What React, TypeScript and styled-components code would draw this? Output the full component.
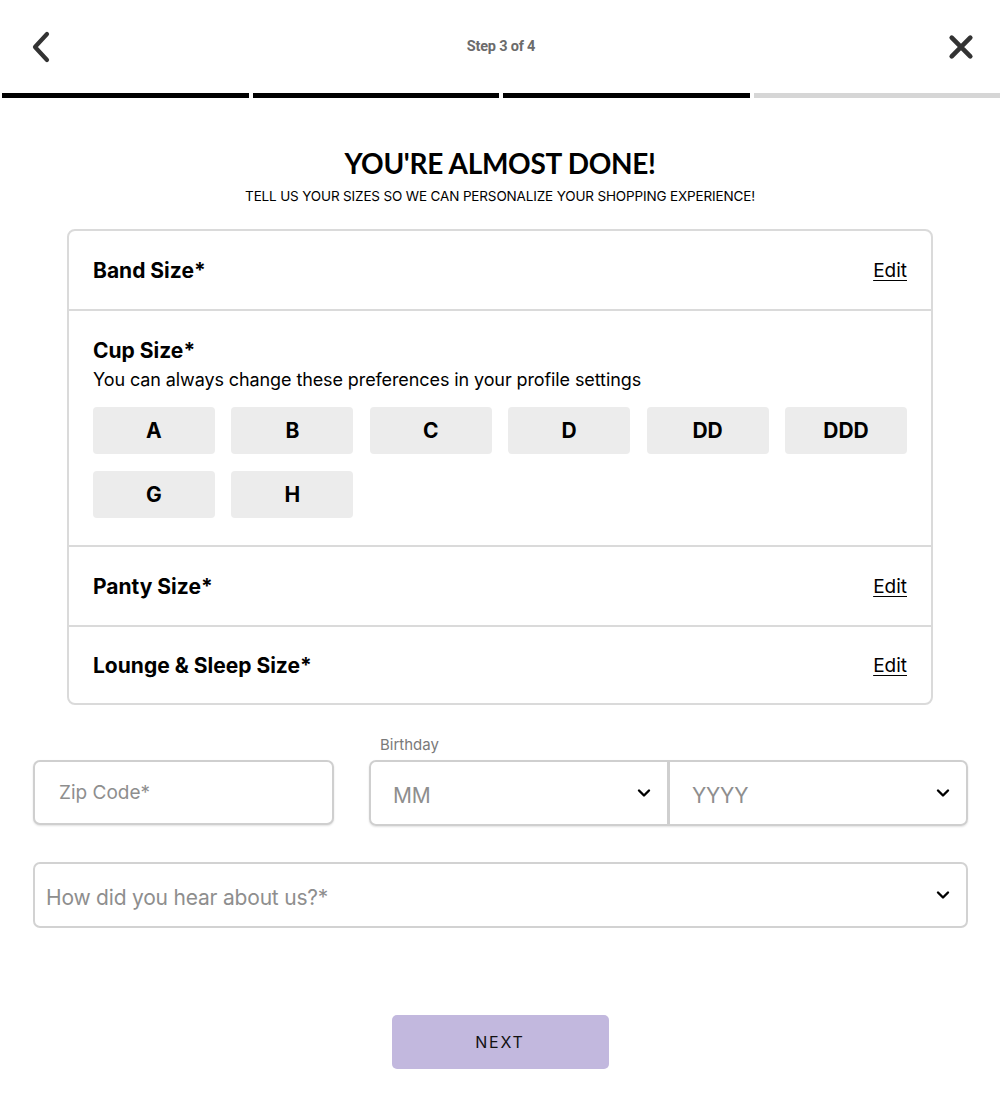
import React from "react";
import styled, { createGlobalStyle } from "styled-components";

const Global = createGlobalStyle`
  html, body { margin: 0; padding: 0; background: #fff; }
  body { font-family: Inter, "Noto Sans", sans-serif; color: #000; }
  * { box-sizing: border-box; }
`;

const Page = styled.div`
  width: 1000px;
  min-height: 1114px;
  background: #fff;
  display: flex;
  flex-direction: column;
`;

const Header = styled.header`
  height: 93px;
  display: flex;
  align-items: center;
  justify-content: space-between;
  padding: 0 26px 0 28px;
`;

const IconButton = styled.button`
  border: none;
  background: none;
  padding: 0;
  width: 26px;
  height: 32px;
  display: flex;
  align-items: center;
  justify-content: center;
  cursor: pointer;
`;

const StepText = styled.div`
  font-family: Roboto, "Liberation Sans", sans-serif;
  font-size: 14.5px;
  font-weight: 700;
  color: #6b6b6b;
  letter-spacing: -0.2px;
`;

const Progress = styled.div`
  display: flex;
  gap: 4px;
  padding-left: 2px;
`;

const Segment = styled.div<{ $done: boolean }>`
  flex: 1;
  height: 5px;
  background: ${(p) => (p.$done ? "#000" : "#d6d6d6")};
`;

const Title = styled.h1`
  margin: 48px 0 0;
  text-align: center;
  font-family: Lato, "Noto Sans", sans-serif;
  font-weight: 700;
  font-size: 28px;
  line-height: 34px;
  letter-spacing: -0.3px;
`;

const Subtitle = styled.p`
  margin: 8px 0 0;
  text-align: center;
  font-family: Inter, sans-serif;
  font-size: 13.5px;
  line-height: 17px;
  letter-spacing: -0.15px;
`;

const Card = styled.div`
  margin: 24px 67px 0;
  border: 2px solid #dadada;
  border-radius: 8px;
  display: flex;
  flex-direction: column;
`;

const Row = styled.div`
  height: 78px;
  display: flex;
  align-items: center;
  justify-content: space-between;
  padding: 0 24px;
  & + & { border-top: 2px solid #dadada; }
`;

const Divider = styled.div`
  height: 2px;
  background: #dadada;
`;

const Label = styled.div`
  font-size: 21px;
  font-weight: 700;
  letter-spacing: 0;
  line-height: 25px;
`;

const EditLink = styled.a`
  font-size: 19px;
  color: #000;
  text-decoration: underline;
  text-underline-offset: 3px;
  cursor: pointer;
`;

const CupSection = styled.div`
  padding: 27px 24px 27px;
  display: flex;
  flex-direction: column;
`;

const Hint = styled.div`
  margin-top: 6px;
  font-size: 18px;
  line-height: 22px;
  letter-spacing: -0.1px;
`;

const SizeGrid = styled.div`
  margin-top: 16px;
  display: grid;
  grid-template-columns: repeat(6, 1fr);
  column-gap: 16.5px;
  row-gap: 17px;
`;

const SizeButton = styled.button`
  height: 47px;
  border: none;
  border-radius: 4px;
  background: #ececec;
  font-family: Inter, sans-serif;
  font-size: 21px;
  font-weight: 700;
  color: #000;
  cursor: pointer;
`;

const Form = styled.div`
  margin-top: 31px;
  padding: 0 32px 0 33px;
  display: flex;
  flex-direction: column;
  gap: 36px;
`;

const FieldRow = styled.div`
  display: flex;
  align-items: flex-end;
  gap: 35px;
`;

const ZipInput = styled.input`
  width: 301px;
  height: 65px;
  border: 2px solid #cfcfcf;
  border-radius: 7px;
  box-shadow: 0 1px 2px rgba(0,0,0,0.12);
  padding: 0 24px;
  font-family: Inter, sans-serif;
  font-size: 19px;
  margin-bottom: 1px;
  &::placeholder { color: #8e8e8e; }
`;

const BirthdayCol = styled.div`
  flex: 1;
  display: flex;
  flex-direction: column;
`;

const SmallLabel = styled.div`
  font-size: 15px;
  color: #7a7a7a;
  padding-left: 11px;
  margin-bottom: 6px;
  line-height: 18px;
`;

const SelectGroup = styled.div`
  display: flex;
  height: 66px;
  border: 2px solid #cfcfcf;
  border-radius: 7px;
  box-shadow: 0 1px 2px rgba(0,0,0,0.12);
`;

const SelectPart = styled.div<{ $divider?: boolean }>`
  flex: 1;
  display: flex;
  align-items: center;
  justify-content: space-between;
  padding: 0 16px 0 22px;
  border-left: ${(p) => (p.$divider ? "3px solid #cfcfcf" : "none")};
`;

const Placeholder = styled.span<{ $size?: number }>`
  font-size: ${(p) => p.$size ?? 21}px;
  color: #8e8e8e;
  letter-spacing: -0.2px;
  padding-top: 4px;
`;

const HearSelect = styled.div`
  height: 66px;
  border: 2px solid #d2d2d2;
  border-radius: 7px;
  display: flex;
  align-items: center;
  justify-content: space-between;
  padding: 0 16px 0 11px;
`;

const Footer = styled.div`
  margin-top: 87px;
  display: flex;
  justify-content: center;
`;

const NextButton = styled.button`
  width: 217px;
  height: 54px;
  border: none;
  border-radius: 5px;
  background: #c2b8de;
  font-family: Inter, sans-serif;
  font-size: 16px;
  letter-spacing: 1.8px;
  color: #111;
  cursor: pointer;
`;

const Chevron = () => (
  <svg width="14" height="10" viewBox="0 0 14 10">
    <path d="M2 2.5 L7 7.5 L12 2.5" fill="none" stroke="#000" strokeWidth="2.4" strokeLinecap="round" strokeLinejoin="round" />
  </svg>
);

const sizes = ["A", "B", "C", "D", "DD", "DDD", "G", "H"];

export default function App() {
  return (
    <Page>
      <Global />
      <Header>
        <IconButton aria-label="Back">
          <svg width="22" height="34" viewBox="0 0 22 34">
            <path d="M17 4 L5 17 L17 30" fill="none" stroke="#333" strokeWidth="4.2" strokeLinecap="round" strokeLinejoin="round" />
          </svg>
        </IconButton>
        <StepText>Step 3 of 4</StepText>
        <IconButton aria-label="Close">
          <svg width="28" height="28" viewBox="0 0 28 28">
            <path d="M4 4 L24 24 M24 4 L4 24" fill="none" stroke="#333" strokeWidth="5" strokeLinecap="round" />
          </svg>
        </IconButton>
      </Header>
      <Progress>
        <Segment $done />
        <Segment $done />
        <Segment $done />
        <Segment $done={false} />
      </Progress>

      <Title>YOU'RE ALMOST DONE!</Title>
      <Subtitle>TELL US YOUR SIZES SO WE CAN PERSONALIZE YOUR SHOPPING EXPERIENCE!</Subtitle>

      <Card>
        <Row>
          <Label>Band Size*</Label>
          <EditLink>Edit</EditLink>
        </Row>
        <Divider />
        <CupSection>
          <Label>Cup Size*</Label>
          <Hint>You can always change these preferences in your profile settings</Hint>
          <SizeGrid>
            {sizes.map((s) => (
              <SizeButton key={s}>{s}</SizeButton>
            ))}
          </SizeGrid>
        </CupSection>
        <Divider />
        <Row>
          <Label>Panty Size*</Label>
          <EditLink>Edit</EditLink>
        </Row>
        <Row>
          <Label>Lounge &amp; Sleep Size*</Label>
          <EditLink>Edit</EditLink>
        </Row>
      </Card>

      <Form>
        <FieldRow>
          <ZipInput placeholder="Zip Code*" />
          <BirthdayCol>
            <SmallLabel>Birthday</SmallLabel>
            <SelectGroup>
              <SelectPart>
                <Placeholder>MM</Placeholder>
                <Chevron />
              </SelectPart>
              <SelectPart $divider>
                <Placeholder>YYYY</Placeholder>
                <Chevron />
              </SelectPart>
            </SelectGroup>
          </BirthdayCol>
        </FieldRow>
        <HearSelect>
          <Placeholder $size={21}>How did you hear about us?*</Placeholder>
          <Chevron />
        </HearSelect>
      </Form>

      <Footer>
        <NextButton>NEXT</NextButton>
      </Footer>
    </Page>
  );
}
